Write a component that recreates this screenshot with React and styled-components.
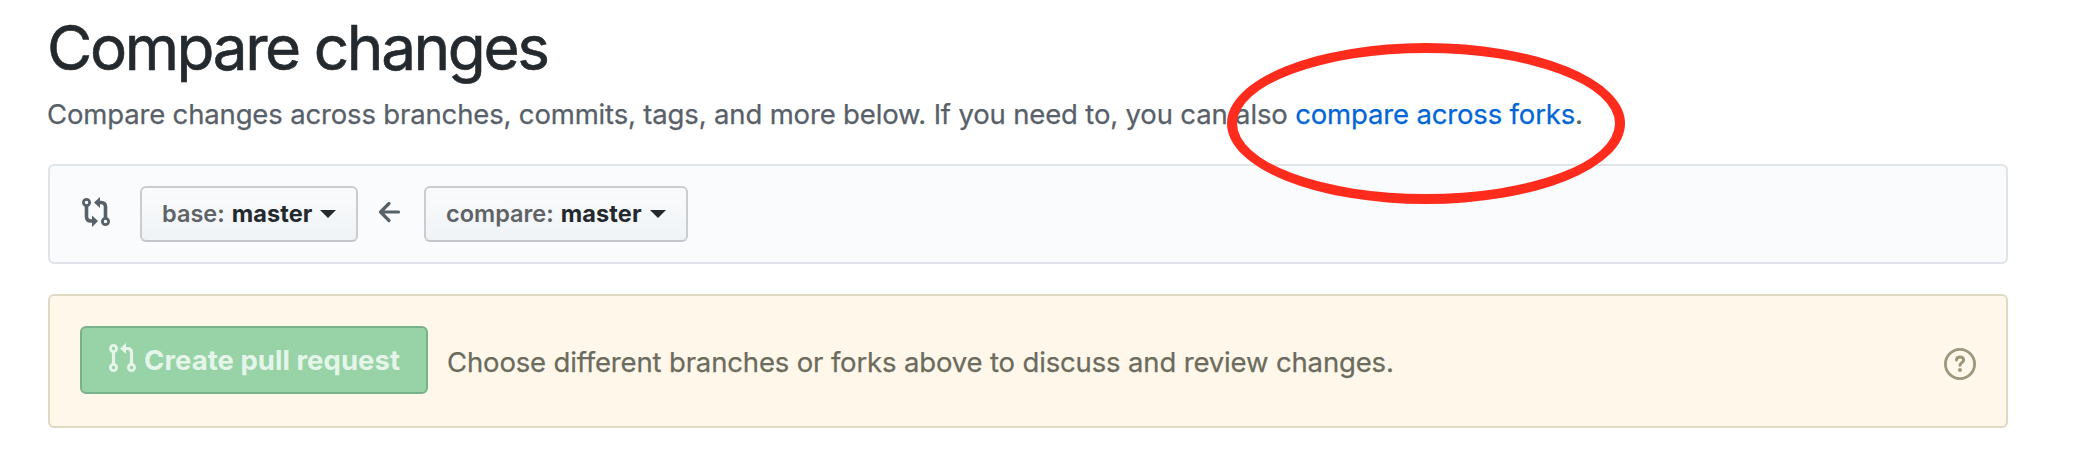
import React from "react";
import styled, { createGlobalStyle } from "styled-components";

const GlobalStyle = createGlobalStyle`
  * { box-sizing: border-box; }
  body { margin: 0; background: #fff; font-family: Inter, "Liberation Sans", sans-serif; color: #24292e; }
`;
const Page = styled.main`
  position: relative;
  height: 453px;
  padding: 8px 84px 0 48px;
  overflow: hidden;
`;
const Title = styled.h1`
  margin: 0 0 0 -1px;
  font-size: 62px;
  font-weight: 400;
  line-height: 80px;
  letter-spacing: -2.4px;
  -webkit-text-stroke: 0.6px currentColor;
  white-space: nowrap;
`;
const Subtitle = styled.p`
  margin: 5px 0 0 -1px;
  height: 63px;
  font-size: 27.5px;
  line-height: 42px;
  letter-spacing: -0.158px;
  -webkit-text-stroke: 0.25px currentColor;
  color: #586069;
  white-space: nowrap;
`;
const Link = styled.a`
  color: #0366d6;
  text-decoration: none;
`;
const RangeEditor = styled.section`
  display: flex;
  align-items: center;
  height: 100px;
  margin-top: 8px;
  padding-left: 32px;
  border: 2px solid #e1e4e8;
  border-radius: 6px;
  background: #fafbfc;
  color: #586069;
`;
const BranchButton = styled.button`
  display: flex;
  align-items: center;
  width: ${(p) => p.$width}px;
  height: 56px;
  padding: 0 0 1px 20px;
  border: 2px solid #cacccf;
  border-bottom-color: #c3c6cc;
  border-radius: 6px;
  background: linear-gradient(#fafbfc, #eff3f6);
  font: 600 23.5px/36px Inter, sans-serif;
  letter-spacing: 0;
  color: #5f6366;
  white-space: nowrap;
`;
const BranchName = styled.b`
  margin-left: 7px;
  font-weight: 700;
  letter-spacing: 0.1px;
  color: #24292e;
`;
const Caret = styled.span`
  margin: 1px 0 0 8px;
  border: 8px solid transparent;
  border-top-color: #24292e;
  border-bottom: 0;
`;
const CompareIcon = styled.svg`
  width: 30px;
  height: 32px;
  margin: 0 28px 2px 0;
`;
const ArrowIcon = styled.svg`
  width: 24px;
  height: 24px;
  margin: 0 22px 5px 20px;
`;
const Notice = styled.section`
  display: flex;
  align-items: center;
  height: 134px;
  margin-top: 30px;
  padding: 0 30px;
  border: 2px solid #dfd8c2;
  border-radius: 6px;
  background: #fff8ea;
`;
const CreateButton = styled.button`
  display: flex;
  align-items: center;
  width: 348px;
  height: 68px;
  margin-bottom: 2px;
  padding: 0 0 0 26px;
  border: 2px solid #79b28a;
  border-radius: 6px;
  background: #97d3a6;
  font: 700 27.5px/40px Inter, sans-serif;
  letter-spacing: 0.04px;
  color: #e6f5ea;
  white-space: nowrap;
`;
const PullIcon = styled.svg`
  width: 30px;
  height: 32px;
  margin: 0 6px 4px 0;
`;
const Message = styled.p`
  margin: 2px auto 0 19px;
  font-size: 27.5px;
  line-height: 42px;
  letter-spacing: -0.15px;
  -webkit-text-stroke: 0.25px currentColor;
  color: #6b6b5e;
  white-space: nowrap;
`;
const HelpIcon = styled.svg`
  width: 32px;
  height: 32px;
  margin-top: 6px;
`;
const Highlight = styled.div`
  position: absolute;
  left: 1227px;
  top: 43px;
  width: 398px;
  height: 161px;
  border: 10px solid #ff2b1c;
  border-radius: 50%;
`;

export default function App() {
  return (
    <>
      <GlobalStyle />
      <Page>
        <Title>Compare changes</Title>
        <Subtitle>
          Compare changes across branches, commits, tags, and more below. If you need to, you can also{" "}
          <Link>compare across forks</Link>.
        </Subtitle>
        <RangeEditor>
          <CompareIcon viewBox="0 0 30 32" fill="none" stroke="currentColor">
            <circle cx="4.5" cy="5.5" r="3.1" strokeWidth="2.8" />
            <circle cx="23.5" cy="24.5" r="3.1" strokeWidth="2.8" />
            <path d="M4.5 9V19.5Q4.5 24 9 24H11M23.5 21V10Q23.5 5.5 19 5.5H17" strokeWidth="3.6" />
            <path d="M18 0V11L12 5.5ZM10 18.5V30L16 24Z" fill="currentColor" stroke="none" />
          </CompareIcon>
          <BranchButton $width={218}>base:<BranchName>master</BranchName><Caret /></BranchButton>
          <ArrowIcon viewBox="0 0 24 24" fill="none" stroke="currentColor" strokeWidth="3.2" strokeLinecap="round" strokeLinejoin="round">
            <path d="M20.5 12H2.5M11 3.5L2.5 12L11 20.5" />
          </ArrowIcon>
          <BranchButton $width={264}>compare:<BranchName>master</BranchName><Caret /></BranchButton>
        </RangeEditor>
        <Notice>
          <CreateButton>
            <PullIcon viewBox="0 0 30 32" fill="none" stroke="currentColor">
              <circle cx="5.5" cy="6.5" r="3.1" strokeWidth="2.8" />
              <circle cx="5.5" cy="25.5" r="3.1" strokeWidth="2.8" />
              <circle cx="23.5" cy="25.5" r="3.1" strokeWidth="2.8" />
              <path d="M5.5 10V22M23.5 22V10.5Q23.5 6.5 19.5 6.5H17" strokeWidth="3.2" />
              <path d="M18 1V12L12 6.5Z" fill="currentColor" stroke="none" />
            </PullIcon>
            Create pull request
          </CreateButton>
          <Message>Choose different branches or forks above to discuss and review changes.</Message>
          <HelpIcon viewBox="0 0 32 32" fill="none" stroke="#9c987c">
            <circle cx="16" cy="16" r="14.6" strokeWidth="2.8" />
            <path d="M12.4 12C12.8 7.8 19.6 8 19.6 12C19.6 14.8 16 14.6 16 17.2" strokeWidth="3" strokeLinecap="round" />
            <circle cx="16" cy="22" r="2" fill="#9c987c" stroke="none" />
          </HelpIcon>
        </Notice>
        <Highlight />
      </Page>
    </>
  );
}
